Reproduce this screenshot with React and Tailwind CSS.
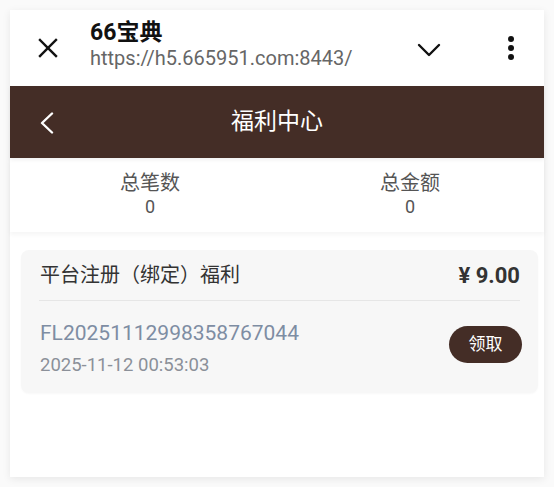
import React from "react";

const font = { fontFamily: 'Roboto, "Noto Sans CJK SC", sans-serif' };

const CloseIcon = () => (
  <svg width="20" height="20" viewBox="0 0 20 20" fill="none" stroke="#111" strokeWidth="2.4" strokeLinecap="square">
    <line x1="2" y1="2" x2="18" y2="18" />
    <line x1="18" y1="2" x2="2" y2="18" />
  </svg>
);

const ChevronDown = () => (
  <svg width="24" height="14" viewBox="0 0 24 14" fill="none" stroke="#111" strokeWidth="2.4" strokeLinecap="round" strokeLinejoin="round">
    <polyline points="2,2 12,12 22,2" />
  </svg>
);

const MoreIcon = () => (
  <svg width="8" height="26" viewBox="0 0 8 26" fill="#111">
    <circle cx="4" cy="4" r="3" />
    <circle cx="4" cy="13" r="3" />
    <circle cx="4" cy="22" r="3" />
  </svg>
);

const BackIcon = () => (
  <svg width="14" height="22" viewBox="0 0 14 22" fill="none" stroke="#fff" strokeWidth="2.4" strokeLinecap="round" strokeLinejoin="round">
    <polyline points="12,1.5 2,11 12,20.5" />
  </svg>
);

const App = () => {
  return (
    <div className="w-[554px] h-[487px] bg-[#fafafa] p-[10px]" style={font}>
      <div className="w-[534px] h-[467px] bg-white shadow-[0_2px_8px_rgba(0,0,0,0.08)] flex flex-col">
        {/* browser bar */}
        <div className="h-[76px] flex items-center pl-[28px] pr-[29px]">
          <div className="w-[20px] mt-[-1px]">
            <CloseIcon />
          </div>
          <div className="ml-[32px] flex-1 mt-[-6px]">
            <div className="text-[23px] leading-[26px] font-bold text-[#111]">66宝典</div>
            <div className="text-[20px] leading-[24px] text-[#666]">https://h5.665951.com:8443/</div>
          </div>
          <div className="mr-[66px] mt-[3px]">
            <ChevronDown />
          </div>
          <MoreIcon />
        </div>

        {/* page header */}
        <div className="h-[72px] bg-[#442d26] flex items-center shadow-[0_2px_4px_rgba(0,0,0,0.06)]">
          <div className="pl-[30px] w-[80px] pt-[2px]">
            <BackIcon />
          </div>
          <div className="flex-1 text-center text-white text-[23px] leading-[30px] pr-[80px]">福利中心</div>
        </div>

        {/* stats */}
        <div className="grid grid-cols-2 pl-[10px] pr-[4px] pt-[13px] pb-[13px] text-[#555] text-center shadow-[0_3px_4px_rgba(0,0,0,0.04)]">
          <div>
            <div className="text-[20px] leading-[24px]">总笔数</div>
            <div className="text-[18px] leading-[24px]">0</div>
          </div>
          <div>
            <div className="text-[20px] leading-[24px]">总金额</div>
            <div className="text-[18px] leading-[24px]">0</div>
          </div>
        </div>

        {/* welfare card */}
        <div className="mt-[18px] ml-[11px] mr-[6px] bg-[#f7f7f7] rounded-[8px] px-[18px] shadow-[0_1px_2px_rgba(0,0,0,0.03)]">
          <div className="h-[51px] flex items-center justify-between border-b border-[#e6e6e6]">
            <div className="text-[20px] text-[#333] ml-[1px]">平台注册（绑定）福利</div>
            <div className="text-[22px] font-bold text-[#333]">¥ 9.00</div>
          </div>
          <div className="flex items-center justify-between pt-[19px] pb-[17px]">
            <div className="ml-[1px]">
              <div className="text-[21px] leading-[26px] text-[#7e8da3]">FL20251112998358767044</div>
              <div className="mt-[8px] text-[18.5px] leading-[22px] text-[#8b9099]">2025-11-12 00:53:03</div>
            </div>
            <button className="w-[73px] h-[37px] rounded-full bg-[#442d26] text-white text-[17px] mb-[7px] mr-[-2px]">
              领取
            </button>
          </div>
        </div>
      </div>
    </div>
  );
};

export default App;
